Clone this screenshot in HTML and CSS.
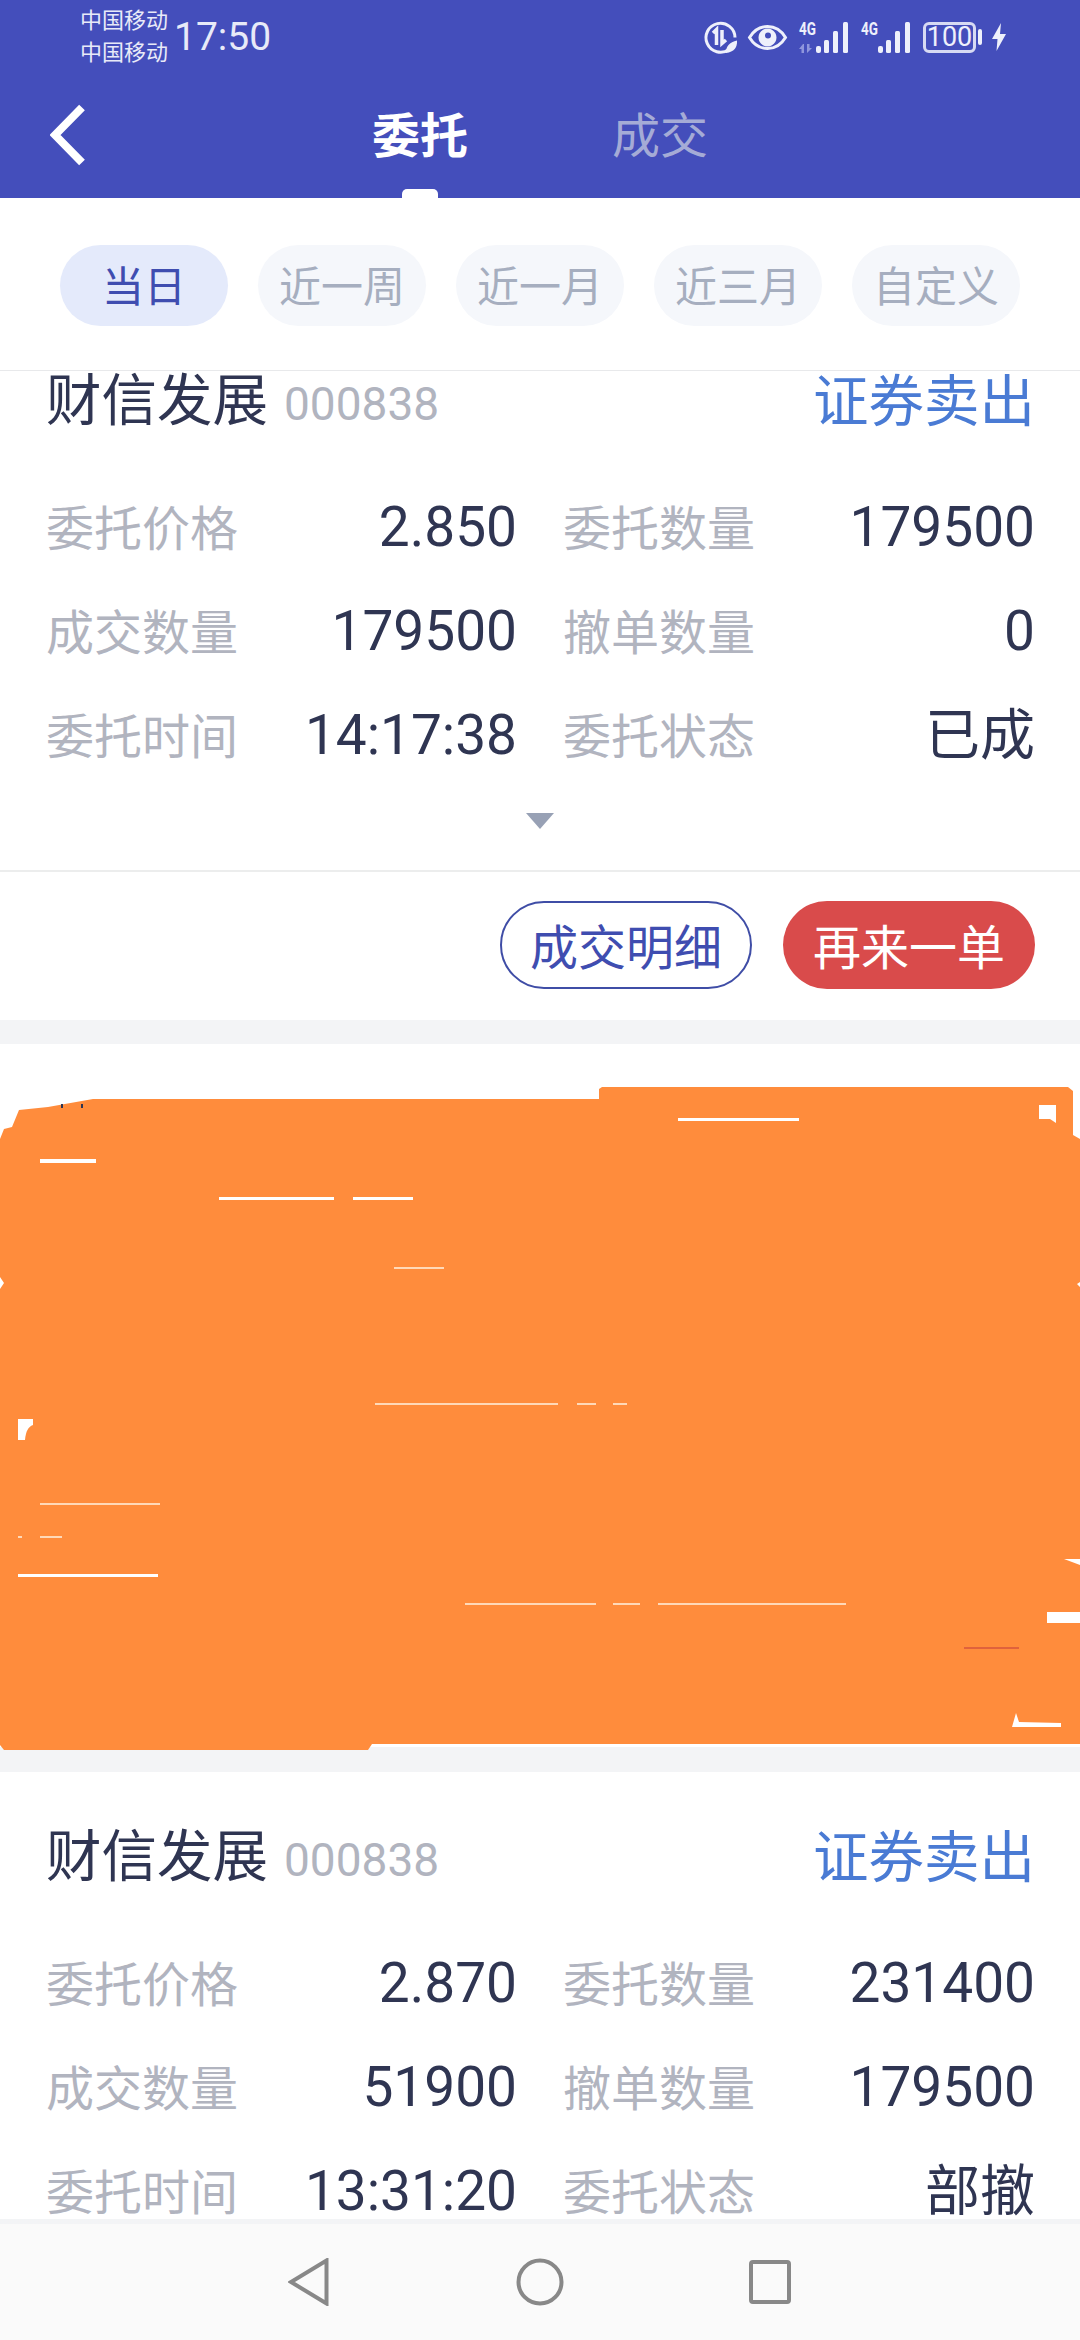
FILE: index.html
```html
<!DOCTYPE html>
<html lang="zh-CN">
<head>
<meta charset="utf-8">
<title>委托</title>
<link rel="stylesheet" href="styles.css">
</head>
<body>
<div class="app">
  <header class="top">
    <div class="status">
      <div class="carriers"><span>中国移动</span><span>中国移动</span></div>
      <div class="time">17:50</div>
      <div class="status-icons">
        <svg class="ic-saver" viewBox="0 0 33 33"><path class="st" d="M25 28.500A14.500 14.500 0 1 1 31 16.500"/><path class="st thin" d="M9 12l3.500-3.500V24M18 9v13.500l4-3.500"/><path class="fl" d="M33 19.500c.5 7-3 11.500-11 12.500-.5-6 3.500-11 11-12.500z"/></svg>
        <svg class="ic-eye" viewBox="0 0 39 25"><path class="st" d="M1.500 12.500C6 5 12 1.500 19.500 1.500S33 5 37.500 12.500C33 20 27 23.500 19.500 23.500S6 20 1.500 12.500z"/><path class="fl" fill-rule="evenodd" d="M19.500 3.500a9 9 0 1 1-.01 0zM20 7.500a3 3 0 1 0 0 6 3 3 0 0 0 0-6z"/></svg>
        <svg class="ic-sig" viewBox="0 0 50 33"><text class="sig-t" x="0" y="14" textLength="17" lengthAdjust="spacingAndGlyphs">4G</text><path class="dim" d="M4 23l-4 5h2.500v4H5v-9zM8 23v9l5-5h-2.500v-4z"/><rect class="fl" x="17" y="25" width="5" height="7" rx="2"/><rect class="fl" x="25" y="19" width="5" height="13" rx="1.500"/><rect class="fl" x="34" y="10" width="5" height="22" rx="1.500"/><rect class="fl" x="44" y="1" width="5" height="31" rx="1.500"/></svg>
        <svg class="ic-sig" viewBox="0 0 50 33"><text class="sig-t" x="0" y="14" textLength="17" lengthAdjust="spacingAndGlyphs">4G</text><rect class="fl" x="17" y="25" width="5" height="7" rx="2"/><rect class="fl" x="25" y="19" width="5" height="13" rx="1.500"/><rect class="fl" x="34" y="10" width="5" height="22" rx="1.500"/><rect class="fl" x="44" y="1" width="5" height="31" rx="1.500"/></svg>
        <div class="battery"><span class="batt-box">100</span><i class="batt-nub"></i></div>
        <svg class="ic-bolt" viewBox="0 0 14 28"><path class="fl" d="M9 0L0 16h5.500L4.500 28 14 11H8z"/></svg>
      </div>
    </div>
    <nav class="tabs">
      <svg class="back" viewBox="0 0 36 62"><path d="M32 3.500L5 31l27 27.500"/></svg>
      <div class="tab-list">
        <span class="tab on">委托</span>
        <span class="tab">成交</span>
      </div>
    </nav>
  </header>

  <div class="pills">
    <span class="pill on">当日</span>
    <span class="pill">近一周</span>
    <span class="pill">近一月</span>
    <span class="pill">近三月</span>
    <span class="pill">自定义</span>
  </div>

  <main class="list">
    <section class="card card-first">
      <div class="title-row">
        <div class="name">财信发展<span class="code">000838</span></div>
        <div class="kind">证券卖出</div>
      </div>
      <div class="grid">
        <div class="cell"><span class="lab">委托价格</span><span class="val">2.850</span></div>
        <div class="cell"><span class="lab">委托数量</span><span class="val">179500</span></div>
        <div class="cell"><span class="lab">成交数量</span><span class="val">179500</span></div>
        <div class="cell"><span class="lab">撤单数量</span><span class="val">0</span></div>
        <div class="cell"><span class="lab">委托时间</span><span class="val">14:17:38</span></div>
        <div class="cell"><span class="lab">委托状态</span><span class="val">已成</span></div>
      </div>
      <div class="more"><i class="caret"></i></div>
      <div class="actions">
        <button class="btn ghost">成交明细</button>
        <button class="btn solid">再来一单</button>
      </div>
    </section>

    <section class="card card-hidden">
      <svg class="scribble" viewBox="0 1045 1080 710">
        <path class="ink" d="M0 1140L4 1130 12 1128 19 1111 48 1108 93 1100H599V1090L602 1088H1068L1073 1092V1136L1080 1140V1283L1077 1285 1080 1288V1560H1064L1080 1566V1613H1047V1624H1080V1745H372L368 1751H4L0 1746V1290L4 1284 0 1278z"/>
        <path class="gap" d="M1039 1106H1056V1124L1050 1120 1039 1120zM18 1420H33V1426C28 1428 26 1432 25 1441H18zM1012 1728L1016 1714 1019 1723 1061 1724V1728z"/>
        <rect class="gap" x="40" y="1160" width="56" height="4"/>
        <rect class="gap" x="219" y="1198" width="115" height="3"/>
        <rect class="gap" x="353" y="1198" width="60" height="3"/>
        <rect class="gap" x="678" y="1119" width="121" height="3"/>
        <rect class="gap" x="18" y="1575" width="140" height="3"/>
        <rect class="faint" x="394" y="1268" width="50" height="2"/>
        <rect class="faint" x="375" y="1404" width="183" height="2"/>
        <rect class="faint" x="577" y="1404" width="19" height="2"/>
        <rect class="faint" x="613" y="1404" width="14" height="2"/>
        <rect class="faint" x="40" y="1504" width="120" height="2"/>
        <rect class="faint" x="40" y="1537" width="22" height="2"/>
        <rect class="faint" x="18" y="1537" width="4" height="2"/>
        <rect class="faint" x="465" y="1604" width="131" height="2"/>
        <rect class="faint" x="613" y="1604" width="27" height="2"/>
        <rect class="faint" x="658" y="1604" width="188" height="2"/>
        <rect class="redline" x="964" y="1648" width="55" height="2"/>
        <rect class="tick" x="61" y="1105" width="2" height="4"/>
        <rect class="tick" x="81" y="1105" width="2" height="4"/>
      </svg>
    </section>

    <section class="card">
      <div class="title-row">
        <div class="name">财信发展<span class="code">000838</span></div>
        <div class="kind">证券卖出</div>
      </div>
      <div class="grid">
        <div class="cell"><span class="lab">委托价格</span><span class="val">2.870</span></div>
        <div class="cell"><span class="lab">委托数量</span><span class="val">231400</span></div>
        <div class="cell"><span class="lab">成交数量</span><span class="val">51900</span></div>
        <div class="cell"><span class="lab">撤单数量</span><span class="val">179500</span></div>
        <div class="cell"><span class="lab">委托时间</span><span class="val">13:31:20</span></div>
        <div class="cell"><span class="lab">委托状态</span><span class="val">部撤</span></div>
      </div>
    </section>
  </main>

  <footer class="navbar">
    <svg class="nav-ic tri" viewBox="0 0 42 48"><path d="M38.500 2.500V45.500L3 24z"/></svg>
    <svg class="nav-ic circ" viewBox="0 0 48 48"><circle cx="24" cy="24" r="21.500"/></svg>
    <svg class="nav-ic sq" viewBox="0 0 42 44"><rect x="2" y="2" width="38" height="40" rx="2"/></svg>
  </footer>
</div>
</body>
</html>
```
FILE: styles.css
```css
* { box-sizing: border-box; }
html, body { margin: 0; padding: 0; }
body {
  width: 1080px;
  height: 2340px;
  overflow: hidden;
  background: #fff;
  font-family: Roboto, "Noto Sans CJK SC", sans-serif;
}
.app { display: flex; flex-direction: column; height: 2340px; }

/* header */
.top { background: #444ebb; height: 198px; flex: none; }
.status {
  height: 74px;
  padding: 0 74px 0 80px;
  display: flex;
  align-items: center;
  color: #e8eaf8;
}
.carriers { display: flex; flex-direction: column; font-size: 22px; line-height: 32px; }
.time { font-size: 39px; line-height: 48px; margin-left: 6px; }
.status-icons { margin-left: auto; display: flex; align-items: center; }
.status-icons svg { display: block; overflow: visible; }
.fl { fill: #eef0fb; }
.st { fill: none; stroke: #eef0fb; stroke-width: 3; }
.st.thin { stroke-width: 3.500; }
.dim { fill: #8f96dc; }
.sig-t { fill: #eef0fb; font: 700 18px Roboto, sans-serif; }
.ic-saver { width: 33px; height: 33px; }
.ic-eye { width: 39px; height: 25px; margin-left: 11px; }
.ic-sig { width: 50px; height: 33px; margin-left: 12px; }
.battery { display: flex; align-items: center; margin-left: 12px; }
.batt-box {
  width: 53px;
  height: 31px;
  border: 3px solid #d7daf3;
  border-radius: 6px;
  font-size: 27px;
  line-height: 25px;
  text-align: center;
  color: #eef0fb;
}
.batt-nub { width: 4px; height: 16px; margin-left: 2px; background: #eef0fb; border-radius: 2px; }
.ic-bolt { width: 14px; height: 28px; margin-left: 10px; }

.tabs {
  height: 124px;
  display: grid;
  grid-template-columns: 1fr auto 1fr;
  align-items: center;
}
.back { width: 36px; height: 62px; margin: 0 0 2px 50px; }
.back path { fill: none; stroke: #fff; stroke-width: 8; }
.tab-list { display: flex; gap: 144px; height: 100%; align-items: center; }
.tab { position: relative; font-size: 48px; line-height: 124px; height: 124px; padding-top: 1px; color: #a5abd6; }
.tab.on { color: #fff; font-weight: 700; }
.tab.on::after {
  content: "";
  position: absolute;
  left: 30px;
  bottom: 0;
  width: 36px;
  height: 9px;
  background: #fff;
  border-radius: 5px 5px 0 0;
}

/* range pills */
.pills {
  flex: none;
  height: 173px;
  padding: 47px 60px 0;
  display: flex;
  gap: 30px;
  align-items: flex-start;
  border-bottom: 1px solid #e8e9eb;
}
.pill {
  width: 168px;
  height: 81px;
  border-radius: 41px;
  background: #f5f7fb;
  color: #a6aebf;
  font-size: 42px;
  line-height: 86px;
  text-align: center;
}
.pill.on { background: #e4eafb; color: #3f4db0; }

/* order cards */
.list { flex: 1; min-height: 0; overflow: hidden; background: #f3f4f6; }
.card { background: #fff; margin-bottom: 25px; padding: 55px 45px 0 46px; position: relative; }
.card-first { padding-top: 0; margin-bottom: 24px; }
.card-hidden { height: 703px; padding: 0; }
.title-row { display: flex; justify-content: space-between; align-items: center; height: 64px; }
.name { font-size: 55.5px; line-height: 64px; color: #2f3552; }
.code { font-size: 46px; color: #b1b4bf; margin-left: 16px; }
.kind { font-size: 55.5px; line-height: 64px; color: #4a7bd4; }
.grid {
  margin-top: 40px;
  display: grid;
  grid-template-columns: 471px 472px;
  column-gap: 46px;
  grid-auto-rows: 104px;
}
.cell { display: flex; justify-content: space-between; align-items: center; }
.lab { font-size: 48px; line-height: 54px; padding-top: 6px; color: #b1b4bf; }
.val { font-size: 55px; line-height: 60px; color: #2f3552; }
.more { height: 85px; display: flex; justify-content: center; padding-top: 26px; margin: 0 -45px 0 -46px; border-bottom: 2px solid #eceded; }
.caret {
  width: 0;
  height: 0;
  border-left: 14px solid transparent;
  border-right: 14px solid transparent;
  border-top: 16px solid #98a1b5;
}
.actions { display: flex; justify-content: flex-end; gap: 31px; padding: 29px 0 31px; }
.btn {
  width: 252px;
  height: 88px;
  border-radius: 44px;
  font: 48px/1 Roboto, "Noto Sans CJK SC", sans-serif;
  padding: 7px 0 0;
}
.ghost { background: #fff; border: 2px solid #3f4da6; color: #3f4db0; }
.solid { background: #d94b4b; border: 0; color: #fff; }

/* redaction scribble */
.scribble { position: absolute; left: 0; top: 0; width: 1080px; height: 710px; overflow: visible; }
.ink { fill: #ff8c3c; }
.gap { fill: #fff; }
.faint { fill: #ffd9b8; }
.redline { fill: #e0623c; }
.tick { fill: #2f3552; }

/* system nav */
.navbar {
  flex: none;
  height: 121px;
  background: #fafafa;
  border-top: 5px solid #f3f4f6;
  display: grid;
  grid-template-columns: 288px 42px 186px 48px 185px 42px;
  align-items: center;
}
.nav-ic { display: block; }
.nav-ic path, .nav-ic circle, .nav-ic rect { fill: none; stroke: #888; stroke-width: 4; }
.tri { grid-column: 2; width: 42px; height: 48px; }
.circ { grid-column: 4; width: 48px; height: 48px; }
.sq { grid-column: 6; width: 42px; height: 44px; }
```
